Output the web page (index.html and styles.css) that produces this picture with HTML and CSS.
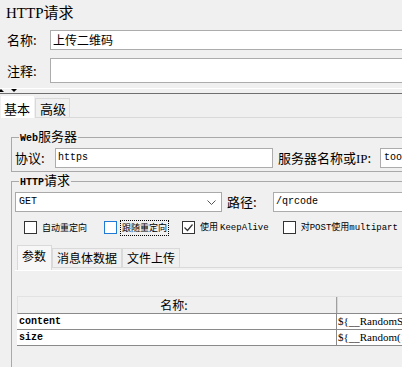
FILE: index.html
```html
<!DOCTYPE html>
<html lang="zh-CN">
<head>
<meta charset="utf-8">
<title>HTTP请求</title>
<link rel="stylesheet" href="styles.css">
</head>
<body>
<div class="app">
  <div class="title">HTTP请求</div>

  <div class="field-row row-name">
    <span class="field-label">名称:</span>
    <div class="textbox tb-name">上传二维码</div>
  </div>
  <div class="field-row row-comment">
    <span class="field-label">注释:</span>
    <div class="textbox tb-comment"></div>
  </div>

  <div class="splitter">
    <div class="grip"></div>
    <div class="arrows"><span class="arrow up"></span><span class="arrow down"></span></div>
  </div>

  <div class="tabs top-tabs">
    <div class="tab active">基本</div>
    <div class="tab">高级</div>
  </div>

  <div class="main">
    <fieldset class="group web-group">
      <legend><span class="mono">Web</span>服务器</legend>
      <div class="field-row proto-row">
        <span class="lbl lbl-proto">协议:</span>
        <div class="textbox mono tb-proto">https</div>
        <span class="lbl lbl-host">服务器名称或<span class="serif">IP</span>:</span>
        <div class="textbox mono tb-host">tool.example.com</div>
      </div>
    </fieldset>

    <fieldset class="group http-group">
      <legend><span class="mono">HTTP</span>请求</legend>
      <div class="field-row method-row">
        <div class="combo">
          <span class="mono">GET</span>
          <svg class="chevron" width="9" height="5" viewBox="0 0 9 5"><polyline points="0.5,0.5 4.5,4.5 8.5,0.5" fill="none" stroke="#555" stroke-width="1"/></svg>
        </div>
        <span class="lbl lbl-path">路径:</span>
        <div class="textbox mono tb-path">/qrcode</div>
      </div>

      <div class="checks">
        <label class="check c-auto"><span class="box"></span><span class="ctext">自动重定向</span></label>
        <label class="check c-follow"><span class="box hover"></span><span class="ctext focus">跟随重定向</span></label>
        <label class="check c-keep"><span class="box"><svg width="11" height="11" viewBox="0 0 11 11"><polyline points="1.5,5.5 4.5,8.5 9.5,2.5" fill="none" stroke="#333" stroke-width="1.2"/></svg></span><span class="ctext">使用 <span class="mono">KeepAlive</span></span></label>
        <label class="check c-multi"><span class="box"></span><span class="ctext">对<span class="mono">POST</span>使用<span class="mono">multipart</span></span></label>
      </div>

      <div class="tabs sub-tabs">
        <div class="tab active">参数</div>
        <div class="tab">消息体数据</div>
        <div class="tab">文件上传</div>
      </div>

      <div class="sub-panel">
        <div class="table">
          <div class="thead">
            <div class="th col-name">名称:</div>
            <div class="th col-value">值:</div>
          </div>
          <div class="tr">
            <div class="td col-name mono-b">content</div>
            <div class="td col-value serif-v">${__RandomString(5,abcdefghijklmnopqrstuvwxyz)}</div>
          </div>
          <div class="tr">
            <div class="td col-name mono-b">size</div>
            <div class="td col-value serif-v">${__Random(100,300)}</div>
          </div>
        </div>
      </div>
    </fieldset>
  </div>
</div>
</body>
</html>
```
FILE: styles.css
```css
html, body {
  margin: 0;
  padding: 0;
  background: #f0f0f0;
  overflow: hidden;
}
body {
  width: 402px;
  height: 367px;
  font-family: "Noto Sans CJK SC", sans-serif;
  color: #000;
}
.app {
  width: 620px;
}
.mono {
  font-family: "Liberation Mono", "Noto Sans CJK SC", monospace;
}
.serif {
  font-family: "Liberation Serif", "Noto Sans CJK SC", serif;
}

/* title */
.title {
  box-sizing: border-box;
  height: 30px;
  padding: 2px 0 0 6px;
  font: 15px/22px "Liberation Serif", "Noto Sans CJK SC", serif;
}

/* generic rows */
.field-row {
  display: flex;
  align-items: center;
}
.field-label {
  box-sizing: border-box;
  width: 50px;
  padding-left: 7px;
  font-size: 13px;
  line-height: 16px;
}
.textbox {
  box-sizing: border-box;
  background: #fff;
  border: 1px solid #acacac;
}
.row-name {
  height: 20px;
}
.tb-name {
  flex: 1;
  height: 20px;
  padding-left: 2px;
  font-size: 12px;
  line-height: 18px;
}
.row-comment {
  height: 25px;
  margin-top: 8px;
}
.tb-comment {
  flex: 1;
  height: 25px;
}

/* splitter */
.splitter {
  box-sizing: border-box;
  height: 11px;
  padding-top: 5px;
  border-bottom: 1px solid #6f6f6f;
}
.grip {
  height: 1px;
  background: #fff;
}
.arrows {
  display: flex;
}
.arrow {
  width: 0;
  height: 0;
  border-left: 3px solid transparent;
  border-right: 3px solid transparent;
}
.arrow.up {
  margin-left: -2px;
  border-bottom: 3px solid #000;
}
.arrow.down {
  margin-left: 7px;
  border-top: 3px solid #000;
}

/* tabs */
.tabs {
  display: flex;
  align-items: flex-end;
  border-bottom: 1px solid #d9d9d9;
}
.tab {
  box-sizing: border-box;
  border: 1px solid #d9d9d9;
  border-bottom: none;
  background: #f0f0f0;
  font-size: 13px;
  line-height: 17px;
  padding: 0 4px;
}
.top-tabs {
  height: 23px;
}
.top-tabs .tab {
  height: 19px;
  padding: 0 3px;
}
.top-tabs .tab.active {
  height: 23px;
  margin-bottom: -1px;
  background: #fff;
  border-color: #f0f0f0;
  padding-top: 4px;
  padding-left: 3px;
  padding-right: 4px;
}
.top-tabs .tab + .tab {
  padding: 1px 3px 0 4px;
}

/* group boxes */
.main {
  padding-left: 11px;
}
.group {
  margin: 0;
  padding: 0 0 0 3px;
  min-width: 0;
  border: 1px solid #a9a9a9;
}
.group legend {
  box-sizing: border-box;
  height: 14px;
  margin-left: 4px;
  padding: 0 1px;
  font-size: 13px;
  line-height: 12px;
  white-space: nowrap;
}
.group legend .mono {
  font-size: 10px;
  font-weight: bold;
}
.web-group {
  margin-top: 12px;
  padding-bottom: 3px;
}
.http-group {
  margin-top: 2px;
  border-bottom: none;
}
.lbl {
  box-sizing: border-box;
  font-size: 13px;
  line-height: 16px;
}
.proto-row {
  height: 20px;
  margin-top: 4px;
}
.lbl-proto {
  width: 40px;
}
.tb-proto {
  width: 218px;
  height: 20px;
  padding-left: 2px;
  font-size: 10px;
  line-height: 18px;
}
.lbl-host {
  width: 102px;
  margin-left: 5px;
}
.tb-host {
  flex: 1;
  height: 20px;
  padding-left: 3px;
  font-size: 10px;
  line-height: 18px;
}

/* method row */
.method-row {
  height: 20px;
  margin-top: 4px;
}
.combo {
  box-sizing: border-box;
  display: flex;
  align-items: center;
  justify-content: space-between;
  width: 207px;
  height: 20px;
  padding: 0 5px 0 3px;
  background: #fff;
  border: 1px solid #a9a9a9;
  font-size: 10px;
  line-height: 18px;
}
.chevron {
  display: block;
}
.lbl-path {
  width: 46px;
  margin-left: 5px;
}
.tb-path {
  flex: 1;
  height: 20px;
  padding-left: 2px;
  font-size: 10px;
  line-height: 18px;
}

/* checkboxes */
.checks {
  display: flex;
  align-items: center;
  height: 13px;
  margin-top: 9px;
  padding-left: 9px;
}
.check {
  display: flex;
  align-items: center;
  gap: 5px;
  font-size: 9px;
  line-height: 12px;
  white-space: nowrap;
}
.check .mono {
  font-size: 9px;
}
.c-auto { margin-right: 17px; }
.c-follow { margin-right: 15px; }
.c-keep { margin-right: 14px; }
.box {
  box-sizing: border-box;
  display: flex;
  align-items: center;
  justify-content: center;
  width: 13px;
  height: 13px;
  background: #fff;
  border: 1px solid #333;
}
.box.hover {
  border-color: #1e7ad6;
}
.ctext.focus {
  outline: 1px dotted #000;
  outline-offset: 1px;
}

/* sub tabs */
.sub-tabs {
  height: 22px;
  margin-top: 11px;
  margin-left: 2px;
}
.sub-tabs .tab {
  height: 19px;
  font-size: 12px;
  line-height: 18px;
}
.sub-tabs .tab.active {
  height: 25px;
  margin-bottom: -3px;
  padding: 1px 5px 0 4px;
  background: #f7f7f7;
}
.sub-panel {
  margin-top: 2px;
  border-top: 1px solid #fff;
  min-height: 140px;
}

/* table */
.table {
  margin: 25px 0 0 2px;
}
.thead, .tr {
  display: flex;
}
.thead {
  height: 18px;
  box-sizing: border-box;
  border-top: 1px solid #e2e2e2;
  border-left: 1px solid #e2e2e2;
  border-bottom: 1px solid #8a8a8a;
}
.th {
  box-sizing: border-box;
  font-size: 12px;
  line-height: 16px;
  text-align: center;
}
.th.col-name {
  width: 319px;
  padding-right: 6px;
  border-right: 1px solid #a0a0a0;
  box-shadow: 1px 0 0 #d8d8d8;
}
.th.col-value {
  flex: 1;
}
.tr {
  height: 16px;
  box-sizing: border-box;
  background: #fff;
  border-bottom: 1px solid #8a8a8a;
}
.td {
  box-sizing: border-box;
  line-height: 15px;
  white-space: nowrap;
  overflow: hidden;
}
.td.col-name {
  width: 320px;
  padding-left: 2px;
  border-right: 1px solid #8a8a8a;
}
.td.col-value {
  flex: 1;
  padding-left: 1px;
}
.mono-b {
  font-family: "Liberation Mono", monospace;
  font-size: 10px;
  font-weight: bold;
}
.serif-v {
  font-family: "Liberation Serif", serif;
  font-size: 11px;
}
```
